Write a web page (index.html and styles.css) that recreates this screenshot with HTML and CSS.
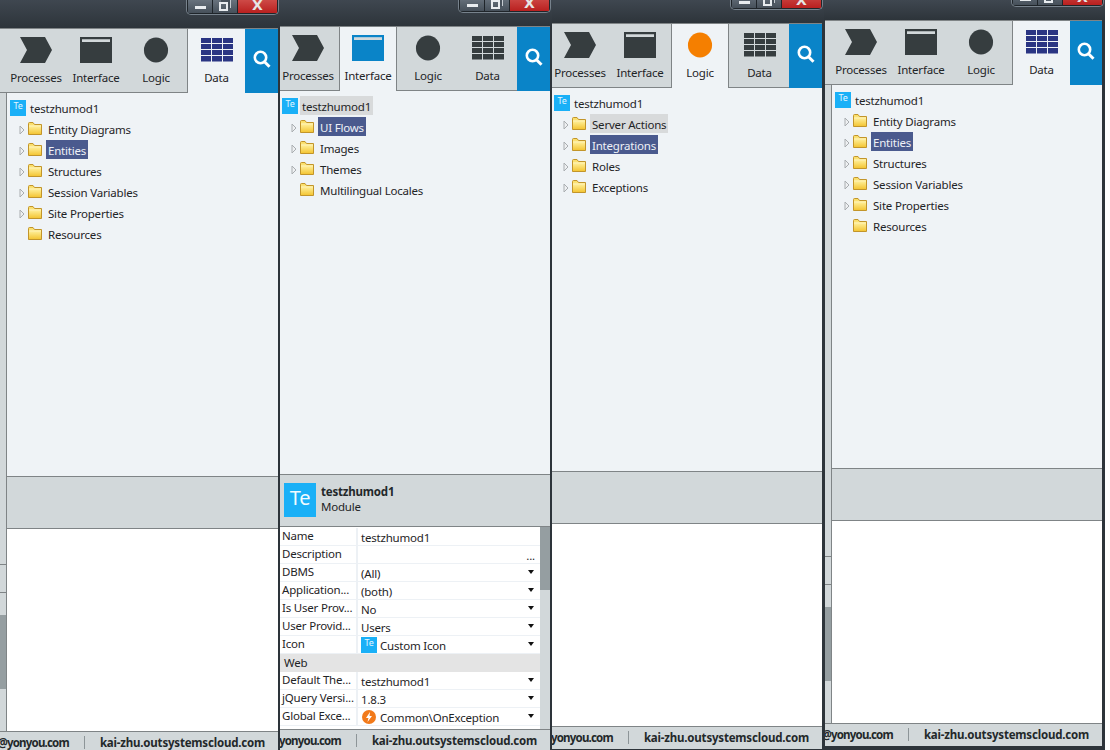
FILE: index.html
```html
<!doctype html>
<html>
<head>
<meta charset="utf-8">
<title>Service Studio</title>
<link rel="stylesheet" href="styles.css">
</head>
<body>
<svg class="defs" width="0" height="0">
	<symbol id="icoProcesses" viewBox="0 0 32 26"><polygon points="0,0 25,0 32,13 25,26 0,26 7,13"/></symbol>
	<symbol id="icoInterface" viewBox="0 0 32 26"><path fill-rule="evenodd" d="M0 0H32V26H0ZM2 2.500V5H30V2.500Z"/><rect class="band" x="2" y="2.500" width="28" height="2.500"/></symbol>
	<symbol id="icoLogic" viewBox="0 0 32 28"><ellipse cx="16" cy="14" rx="13" ry="13.500"/></symbol>
	<symbol id="icoData" viewBox="0 0 32 24"><path d="M0 0H10V5H0ZM11 0H21V5H11ZM22 0H32V5H22ZM0 6H10V11H0ZM11 6H21V11H11ZM22 6H32V11H22ZM0 12H10V17H0ZM11 12H21V17H11ZM22 12H32V17H22ZM0 18H10V23.500H0ZM11 18H21V23.500H11ZM22 18H32V23.500H22Z"/></symbol>
	<symbol id="icoSearch" viewBox="0 0 18 18"><circle cx="7.500" cy="7.500" r="5.700" fill="none" stroke="#fff" stroke-width="2.600"/><line x1="11.500" y1="11.800" x2="16.500" y2="16.800" stroke="#fff" stroke-width="3"/></symbol>
	<symbol id="icoFolder" viewBox="0 0 14 13"><path d="M.5 12.500V1.500Q.5.500 1.500.500H5L6.500 2.500H13.500V12.500Z" fill="url(#folderFill)" stroke="#c2952a"/><path d="M1 4H13" stroke="#fff6c4"/></symbol>
	<symbol id="icoArrow" viewBox="0 0 6 10"><polygon points="1,1 5,5 1,9" fill="#eef0f2" stroke="#a9adb0"/></symbol>
	<linearGradient id="folderFill" x1="0" y1="0" x2="0" y2="1"><stop offset="0" stop-color="#f9dc62"/><stop offset=".4" stop-color="#fde98a"/><stop offset="1" stop-color="#f3c32f"/></linearGradient>
</svg>

<div class="screens">

	<div class="panel panel1">
		<div class="titlebar">
			<div class="winBtns">
				<div class="winBtn"><span class="glyphMin"></span></div>
				<div class="winBtn"><span class="glyphRestore"></span></div>
				<div class="winBtn winClose">X</div>
			</div>
		</div>
		<div class="inner">
			<div class="tabs">
				<div class="tab"><svg class="tabIcon"><use href="#icoProcesses"/></svg><span>Processes</span></div>
				<div class="tab"><svg class="tabIcon"><use href="#icoInterface"/></svg><span>Interface</span></div>
				<div class="tab"><svg class="tabIcon"><use href="#icoLogic"/></svg><span>Logic</span></div>
				<div class="tab tabLast tabOn dataOn"><svg class="tabIcon"><use href="#icoData"/></svg><span>Data</span></div>
				<div class="searchTab"><svg class="searchIcon"><use href="#icoSearch"/></svg></div>
			</div>
			<div class="work">
				<div class="side"><div class="sideTop"></div><div class="sideMid"></div><div class="sideThumb"></div></div>
				<div class="stack">
					<div class="tree">
						<div class="row root"><span class="te">Te</span><span class="label">testzhumod1</span></div>
						<div class="row"><svg class="arrow"><use href="#icoArrow"/></svg><svg class="folder"><use href="#icoFolder"/></svg><span class="label">Entity Diagrams</span></div>
						<div class="row"><svg class="arrow"><use href="#icoArrow"/></svg><svg class="folder"><use href="#icoFolder"/></svg><span class="label selected">Entities</span></div>
						<div class="row"><svg class="arrow"><use href="#icoArrow"/></svg><svg class="folder"><use href="#icoFolder"/></svg><span class="label">Structures</span></div>
						<div class="row"><svg class="arrow"><use href="#icoArrow"/></svg><svg class="folder"><use href="#icoFolder"/></svg><span class="label">Session Variables</span></div>
						<div class="row"><svg class="arrow"><use href="#icoArrow"/></svg><svg class="folder"><use href="#icoFolder"/></svg><span class="label">Site Properties</span></div>
						<div class="row"><span class="arrow"></span><svg class="folder"><use href="#icoFolder"/></svg><span class="label">Resources</span></div>
					</div>
					<div class="info"></div>
					<div class="props"></div>
				</div>
			</div>
			<div class="status"><span class="user">@yonyou.com</span><i class="sep"></i><span>kai-zhu.outsystemscloud.com</span></div>
		</div>
	</div>

	<div class="panel panel2">
		<div class="titlebar">
			<div class="winBtns">
				<div class="winBtn"><span class="glyphMin"></span></div>
				<div class="winBtn"><span class="glyphRestore"></span></div>
				<div class="winBtn winClose">X</div>
			</div>
		</div>
		<div class="inner">
			<div class="tabs">
				<div class="tab"><svg class="tabIcon"><use href="#icoProcesses"/></svg><span>Processes</span></div>
				<div class="tab tabOn interfaceOn"><svg class="tabIcon"><use href="#icoInterface"/></svg><span>Interface</span></div>
				<div class="tab"><svg class="tabIcon"><use href="#icoLogic"/></svg><span>Logic</span></div>
				<div class="tab tabLast"><svg class="tabIcon"><use href="#icoData"/></svg><span>Data</span></div>
				<div class="searchTab"><svg class="searchIcon"><use href="#icoSearch"/></svg></div>
			</div>
			<div class="work">
				<div class="stack">
					<div class="tree">
						<div class="row root"><span class="te">Te</span><span class="label hovered">testzhumod1</span></div>
						<div class="row"><svg class="arrow"><use href="#icoArrow"/></svg><svg class="folder"><use href="#icoFolder"/></svg><span class="label selected">UI Flows</span></div>
						<div class="row"><svg class="arrow"><use href="#icoArrow"/></svg><svg class="folder"><use href="#icoFolder"/></svg><span class="label">Images</span></div>
						<div class="row"><svg class="arrow"><use href="#icoArrow"/></svg><svg class="folder"><use href="#icoFolder"/></svg><span class="label">Themes</span></div>
						<div class="row"><span class="arrow"></span><svg class="folder"><use href="#icoFolder"/></svg><span class="label">Multilingual Locales</span></div>
					</div>
					<div class="info">
						<span class="teBig">Te</span>
						<div class="infoText"><b>testzhumod1</b><span>Module</span></div>
					</div>
					<div class="props">
						<div class="propList">
							<div class="prop"><div class="propName">Name</div><div class="propValue">testzhumod1</div></div>
							<div class="prop"><div class="propName">Description</div><div class="propValue"><em class="dots">...</em></div></div>
							<div class="prop"><div class="propName">DBMS</div><div class="propValue">(All)<i class="drop"></i></div></div>
							<div class="prop"><div class="propName">Application...</div><div class="propValue">(both)<i class="drop"></i></div></div>
							<div class="prop"><div class="propName">Is User Prov...</div><div class="propValue">No<i class="drop"></i></div></div>
							<div class="prop"><div class="propName">User Provid...</div><div class="propValue">Users<i class="drop"></i></div></div>
							<div class="prop"><div class="propName">Icon</div><div class="propValue"><span class="te teValue">Te</span>Custom Icon<i class="drop"></i></div></div>
							<div class="propGroup">Web</div>
							<div class="prop"><div class="propName">Default The...</div><div class="propValue">testzhumod1<i class="drop"></i></div></div>
							<div class="prop"><div class="propName">jQuery Versi...</div><div class="propValue">1.8.3<i class="drop"></i></div></div>
							<div class="prop"><div class="propName">Global Exce...</div><div class="propValue">
								<svg class="boltIcon" viewBox="0 0 14 14"><circle cx="7" cy="7" r="7" fill="#f27a1a"/><polygon points="8,2 4,8 6.500,8 5.500,12 10,6 7.500,6" fill="#fff"/></svg>Common\OnException<i class="drop"></i></div></div>
						</div>
						<div class="propScroll"><div class="propThumb"></div></div>
					</div>
				</div>
			</div>
			<div class="status"><span class="user">@yonyou.com</span><i class="sep"></i><span>kai-zhu.outsystemscloud.com</span></div>
		</div>
	</div>

	<div class="panel panel3">
		<div class="titlebar">
			<div class="winBtns">
				<div class="winBtn"><span class="glyphMin"></span></div>
				<div class="winBtn"><span class="glyphRestore"></span></div>
				<div class="winBtn winClose">X</div>
			</div>
		</div>
		<div class="inner">
			<div class="tabs">
				<div class="tab"><svg class="tabIcon"><use href="#icoProcesses"/></svg><span>Processes</span></div>
				<div class="tab"><svg class="tabIcon"><use href="#icoInterface"/></svg><span>Interface</span></div>
				<div class="tab tabOn logicOn"><svg class="tabIcon"><use href="#icoLogic"/></svg><span>Logic</span></div>
				<div class="tab tabLast"><svg class="tabIcon"><use href="#icoData"/></svg><span>Data</span></div>
				<div class="searchTab"><svg class="searchIcon"><use href="#icoSearch"/></svg></div>
			</div>
			<div class="work">
				<div class="stack">
					<div class="tree">
						<div class="row root"><span class="te">Te</span><span class="label">testzhumod1</span></div>
						<div class="row"><svg class="arrow"><use href="#icoArrow"/></svg><svg class="folder"><use href="#icoFolder"/></svg><span class="label hovered">Server Actions</span></div>
						<div class="row"><svg class="arrow"><use href="#icoArrow"/></svg><svg class="folder"><use href="#icoFolder"/></svg><span class="label selected">Integrations</span></div>
						<div class="row"><svg class="arrow"><use href="#icoArrow"/></svg><svg class="folder"><use href="#icoFolder"/></svg><span class="label">Roles</span></div>
						<div class="row"><svg class="arrow"><use href="#icoArrow"/></svg><svg class="folder"><use href="#icoFolder"/></svg><span class="label">Exceptions</span></div>
					</div>
					<div class="info"></div>
					<div class="props"></div>
				</div>
			</div>
			<div class="status"><span class="user">@yonyou.com</span><i class="sep"></i><span>kai-zhu.outsystemscloud.com</span></div>
		</div>
	</div>

	<div class="panel panel4">
		<div class="titlebar">
			<div class="winBtns">
				<div class="winBtn"><span class="glyphMin"></span></div>
				<div class="winBtn"><span class="glyphRestore"></span></div>
				<div class="winBtn winClose">X</div>
			</div>
		</div>
		<div class="inner">
			<div class="tabs">
				<div class="tab"><svg class="tabIcon"><use href="#icoProcesses"/></svg><span>Processes</span></div>
				<div class="tab"><svg class="tabIcon"><use href="#icoInterface"/></svg><span>Interface</span></div>
				<div class="tab"><svg class="tabIcon"><use href="#icoLogic"/></svg><span>Logic</span></div>
				<div class="tab tabLast tabOn dataOn"><svg class="tabIcon"><use href="#icoData"/></svg><span>Data</span></div>
				<div class="searchTab"><svg class="searchIcon"><use href="#icoSearch"/></svg></div>
			</div>
			<div class="work">
				<div class="side"><div class="sideTop"></div><div class="sideMid"></div><div class="sideThumb"></div></div>
				<div class="stack">
					<div class="tree">
						<div class="row root"><span class="te">Te</span><span class="label">testzhumod1</span></div>
						<div class="row"><svg class="arrow"><use href="#icoArrow"/></svg><svg class="folder"><use href="#icoFolder"/></svg><span class="label">Entity Diagrams</span></div>
						<div class="row"><svg class="arrow"><use href="#icoArrow"/></svg><svg class="folder"><use href="#icoFolder"/></svg><span class="label selected">Entities</span></div>
						<div class="row"><svg class="arrow"><use href="#icoArrow"/></svg><svg class="folder"><use href="#icoFolder"/></svg><span class="label">Structures</span></div>
						<div class="row"><svg class="arrow"><use href="#icoArrow"/></svg><svg class="folder"><use href="#icoFolder"/></svg><span class="label">Session Variables</span></div>
						<div class="row"><svg class="arrow"><use href="#icoArrow"/></svg><svg class="folder"><use href="#icoFolder"/></svg><span class="label">Site Properties</span></div>
						<div class="row"><span class="arrow"></span><svg class="folder"><use href="#icoFolder"/></svg><span class="label">Resources</span></div>
					</div>
					<div class="info"></div>
					<div class="props"></div>
				</div>
			</div>
			<div class="status"><span class="user">@yonyou.com</span><i class="sep"></i><span>kai-zhu.outsystemscloud.com</span></div>
		</div>
	</div>

</div>
</body>
</html>
```

FILE: styles.css
```css
html,body{
	margin: 0;
	background: #fff;
	font-family: "Noto Sans", "Open Sans", sans-serif;
	font-size: 11.5px;
	letter-spacing: -0.2px;
	color: #1f2426;
}

.defs{
	position: absolute;
}

.screens{
	display: flex;
	height: 750px;
	width: 1105px;
	overflow: hidden;
}

.panel{
	flex: none;
	height: 750px;
	overflow: hidden;
	background: #2d343a;
}

.panel1{ width: 280px; }
.panel2{ width: 272px; }
.panel3{ width: 272px; }
.panel4{ width: 281px; }

.inner{
	margin-right: 2px;
}

.panel4 .inner{
	margin-left: 1px;
	margin-right: 3px;
}

/* title bar, the top of it is cut off by the screenshot */
.titlebar{
	display: flex;
	justify-content: flex-end;
	align-items: flex-end;
	overflow: hidden;
	padding: 0 1px 13px 0;
	background: linear-gradient(#3f4750, #2d343a);
	box-sizing: border-box;
}

.panel1 .titlebar{ height: 28px; }
.panel2 .titlebar{ height: 26px; }
.panel3 .titlebar{ height: 23px; }
.panel4 .titlebar{ height: 20px; }

.winBtns{
	flex: none;
	display: flex;
	gap: 1px;
	height: 22px;
	width: 93px;
	padding: 0 1px 1px;
	box-sizing: border-box;
	border: solid #77828c 1px;
	border-top: none;
	border-radius: 0 0 5px 5px;
	background: #1f252a;
}

.winBtn{
	width: 24px;
	display: flex;
	align-items: flex-end;
	justify-content: center;
	padding-bottom: 2px;
	box-sizing: border-box;
	background: linear-gradient(#7a8590, #46505a);
}

.winClose{
	flex: 1;
	padding-bottom: 0;
	background: linear-gradient(#d9605c, #b9201f);
	color: #e6e6e6;
	font-family: "DejaVu Sans", sans-serif;
	font-weight: bold;
	font-size: 14px;
	line-height: 15px;
	letter-spacing: 0;
}

.glyphMin{
	width: 11px;
	height: 3px;
	margin-bottom: 2px;
	background: #e8ecef;
}

.glyphRestore{
	width: 5px;
	height: 5px;
	margin: 0 3px 0 0;
	border: solid #e8ecef 2px;
	box-shadow: 2px -2px 0 0 #46505a, 3px -3px 0 0 #c6ccd2;
}

/* tab strip */
.tabs{
	display: flex;
	height: 65px;
	box-sizing: border-box;
	overflow: hidden;
	background: #d2d8da;
	border-top: solid #7f8486 1px;
	box-shadow: inset 0 -1px 0 #7f8486;
}

.panel1 .tabs,
.panel4 .tabs{
	padding-left: 6px;
}

.panel2 .tab:first-child,
.panel3 .tab:first-child{
	margin-left: -2px;
}

.tab{
	flex: none;
	width: 60px;
	height: 64px;
	padding-top: 8px;
	box-sizing: border-box;
	text-align: center;
	fill: #363d3f;
	line-height: 16px;
}

.tab span{
	display: block;
	margin-top: 7px;
}

.tabLast{
	width: 59px;
}

.tabOn{
	width: 58px;
	margin: 0 1px;
	background: #eff3f6;
	border-left: solid #7f8486 1px;
	border-right: solid #7f8486 1px;
}

.tabLast.tabOn{
	margin-right: 0;
	border-right: none;
}

.tabIcon{
	display: block;
	width: 32px;
	height: 26px;
	margin: 0 auto;
	overflow: visible;
}

.band{
	fill: #d2d8da;
}

.interfaceOn{ fill: #0a84c8; }
.interfaceOn .band{ fill: #c9eaf7; }
.logicOn{ fill: #f57f00; }
.dataOn{ fill: #2a3583; }

.searchTab{
	flex: 1;
	display: flex;
	align-items: center;
	justify-content: center;
	background: #0a84c8;
	padding-bottom: 4px;
}

.searchIcon{
	width: 18px;
	height: 18px;
}

/* tree + panels below */
.work{
	display: flex;
}

.side{
	flex: none;
	width: 7px;
	box-sizing: border-box;
	border-right: solid #7f8486 1px;
	background: #d2d8da;
}

.sideTop{
	height: 472px;
	border-bottom: solid #7f8486 1px;
	box-sizing: border-box;
}

.sideMid{
	height: 28px;
	border-bottom: solid #7f8486 1px;
	box-sizing: border-box;
}

.sideThumb{
	margin-top: 22px;
	height: 74px;
	background: #959ea1;
}

.stack{
	flex: 1;
	min-width: 0;
}

.tree{
	height: 383px;
	box-sizing: border-box;
	padding: 5px 0 0 3px;
	background: #eff3f6;
}

.panel2 .tree,
.panel3 .tree{
	padding-left: 2px;
}

.row{
	display: flex;
	align-items: center;
	height: 21px;
	padding-left: 9px;
	white-space: nowrap;
}

.root{
	padding-left: 0;
}

.te{
	flex: none;
	width: 16px;
	height: 16px;
	margin-top: -2px;
	background: #1ab0f7;
	color: #e4f6ff;
	font-size: 9px;
	line-height: 12px;
	text-align: center;
}

.arrow{
	flex: none;
	width: 6px;
	height: 10px;
	margin-right: 3px;
}

.folder{
	flex: none;
	width: 14px;
	height: 13px;
	margin-right: 4px;
	margin-top: -2px;
}

.label{
	height: 19px;
	margin-top: -2px;
	line-height: 22px;
	padding: 0 2px;
}

.root .label{
	margin-left: 2px;
}

.selected{
	background: #4a5a8e;
	color: #eef1f7;
}

.hovered{
	background: #d8dadb;
}

.info{
	display: flex;
	align-items: center;
	gap: 5px;
	height: 53px;
	padding: 0 0 1px 4px;
	box-sizing: border-box;
	background: #d2d8da;
	border-top: solid #7f8486 1px;
	border-bottom: solid #7f8486 1px;
}

.teBig{
	flex: none;
	width: 32px;
	height: 34px;
	background: #1ab0f7;
	color: #f2fbff;
	font-size: 20px;
	line-height: 30px;
	text-align: center;
}

.infoText{
	display: flex;
	flex-direction: column;
	margin-top: -3px;
	line-height: 15px;
}

.infoText b{
	color: #23282a;
}

/* properties grid */
.props{
	display: flex;
	height: 202px;
	overflow: hidden;
	background: #fff;
}

.propList{
	flex: 1;
	min-width: 0;
	padding-top: 1px;
}

.prop{
	display: flex;
	height: 18px;
	box-sizing: border-box;
	line-height: 16px;
	white-space: nowrap;
	border-bottom: solid #edf1f5 1px;
}

.propName{
	flex: none;
	width: 78px;
	padding-left: 2px;
	box-sizing: border-box;
	border-right: solid #edf1f5 2px;
}

.propValue{
	flex: 1;
	position: relative;
	display: flex;
	align-items: center;
	padding: 3px 0 0 3px;
	height: 17px;
	box-sizing: border-box;
}

.propGroup{
	height: 18px;
	line-height: 18px;
	padding-left: 4px;
	background: #e4e4e4;
}

.drop{
	position: absolute;
	right: 6px;
	top: 6px;
	border: solid transparent 3.5px;
	border-top: solid #111 4px;
	border-bottom: none;
}

.dots{
	position: absolute;
	right: 5px;
	top: 2px;
	font-style: normal;
}

.teValue{
	margin: -2px 3px 0 0;
}

.boltIcon{
	flex: none;
	width: 14px;
	height: 14px;
	margin: -2px 4px 0 1px;
}

.propScroll{
	flex: none;
	width: 10px;
	margin-top: -1px;
	background: #d2d8da;
}

.propThumb{
	height: 64px;
	background: #959ea1;
}

/* status bar */
.status{
	display: flex;
	justify-content: flex-end;
	align-items: center;
	height: 23px;
	padding: 0 13px 2px 0;
	overflow: hidden;
	box-sizing: border-box;
	white-space: nowrap;
	background: #d2d8da;
	border-top: solid #7f8486 1px;
	font-weight: bold;
	color: #23282a;
}

.status span{
	flex: none;
}

.status .user{
	letter-spacing: -0.8px;
}

.sep{
	flex: none;
	width: 1px;
	height: 13px;
	margin: 0 15px;
	background: #8d9598;
}
```
